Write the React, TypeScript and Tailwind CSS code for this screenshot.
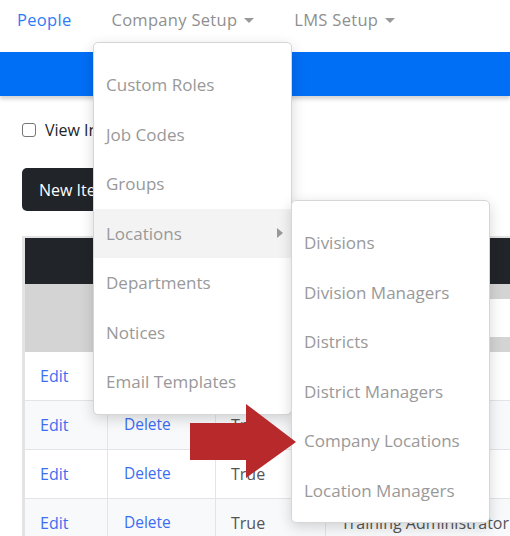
import React from "react";

const menu1 = ["Custom Roles", "Job Codes", "Groups", "Locations", "Departments", "Notices", "Email Templates"];
const menu2 = ["Divisions", "Division Managers", "Districts", "District Managers", "Company Locations", "Location Managers"];
const names = ["Manager", "Employee", "Supervisor", "Training Administrator"];

function Caret() {
  return (
    <span className="ml-[7px] inline-block h-0 w-0 border-x-[5px] border-t-[5px] border-x-transparent border-t-[#999]" />
  );
}

export default function App() {
  return (
    <div className="relative h-[536px] w-[510px] overflow-hidden bg-white font-['Open_Sans',sans-serif] text-[16px]">
      {/* top nav */}
      <nav className="flex h-[52px] items-start gap-[40px] pl-[17px] pt-[7px] text-[16.5px] leading-[26px] tracking-[0.3px]">
        <span className="text-[#2f7bf5]">People</span>
        <span className="flex items-center text-[#8f8f8f]">
          Company Setup
          <Caret />
        </span>
        <span className="flex items-center text-[#8f8f8f]">
          LMS Setup
          <Caret />
        </span>
      </nav>
      <div className="h-[44px] bg-[#006ef5] shadow-[0_3px_4px_rgba(0,0,0,0.18)]" />

      <main className="px-[22px] pt-[26px]">
        <label className="flex items-center gap-[9px] leading-[16px] text-[#212529]">
          <span className="h-[14px] w-[14px] rounded-[3px] border border-[#767676] bg-white" />
          View Inactive
        </label>
        <button className="mt-[30px] flex h-[43px] items-center rounded-[5px] bg-[#212529] px-[17px] text-white">
          New Item
        </button>
        <div className="mt-[25px] w-[560px] border-l-[3px] border-t-2 border-[#e3e3e3]">
          <div className="grid h-[46px] grid-cols-[83px_108px_110px_1fr] bg-[#212529] text-white" />
          <div className="grid h-[68px] grid-cols-[83px_108px_110px_1fr] bg-[#d4d4d4]">
            <div />
            <div />
            <div />
            <div className="flex items-center pl-[8px]">
              <div className="h-[38px] w-full bg-white" />
            </div>
          </div>
          {names.map((n, r) => (
            <div
              key={n}
              className={`grid h-[49px] grid-cols-[83px_108px_110px_1fr] border-b border-[#e2e4e8] ${r % 2 === 1 ? "bg-[#f8f9fa]" : "bg-white"}`}
            >
              <div className="flex items-center border-r border-[#e2e4e8] pl-[15px] text-[#3c6ef2]">Edit</div>
              <div className="flex items-center border-r border-[#e2e4e8] pl-[16px] text-[15.5px] text-[#3c6ef2]">Delete</div>
              <div className="flex items-center border-r border-[#e2e4e8] pl-[15px] text-[#555]">True</div>
              <div className="flex items-center pl-[15px] text-[#555]">{n}</div>
            </div>
          ))}
        </div>
      </main>

      {/* Company Setup dropdown */}
      <div className="absolute left-[93px] top-[42px] w-[199px] rounded-[5px] border border-[#d6d6d6] bg-white pb-[7px] pt-[17px] text-[17px] shadow-[0_4px_14px_rgba(0,0,0,0.16)]">
        {menu1.map((m) => (
          <div
            key={m}
            className={`flex h-[49.5px] items-center justify-between pl-[12px] pr-[8px] text-[#999] ${m === "Locations" ? "bg-[#f3f3f3]" : ""}`}
          >
            <span>{m}</span>
            {m === "Locations" && (
              <span className="h-0 w-0 border-y-[5px] border-l-[6px] border-y-transparent border-l-[#999]" />
            )}
          </div>
        ))}
      </div>

      {/* Locations submenu */}
      <div className="absolute left-[291px] top-[200px] w-[199px] rounded-[5px] border border-[#d6d6d6] bg-white pb-[6px] pt-[17px] text-[17px] shadow-[0_4px_14px_rgba(0,0,0,0.16)]">
        {menu2.map((m) => (
          <div key={m} className="flex h-[49.6px] items-center pl-[12px] text-[#999]">
            {m}
          </div>
        ))}
      </div>

      {/* red arrow */}
      <svg className="absolute left-[190px] top-[404px]" width="107" height="75" viewBox="0 0 107 75">
        <polygon points="0,19 56,19 56,0 106,38 56,74 56,56 0,56" fill="#b8292b" />
      </svg>
    </div>
  );
}
